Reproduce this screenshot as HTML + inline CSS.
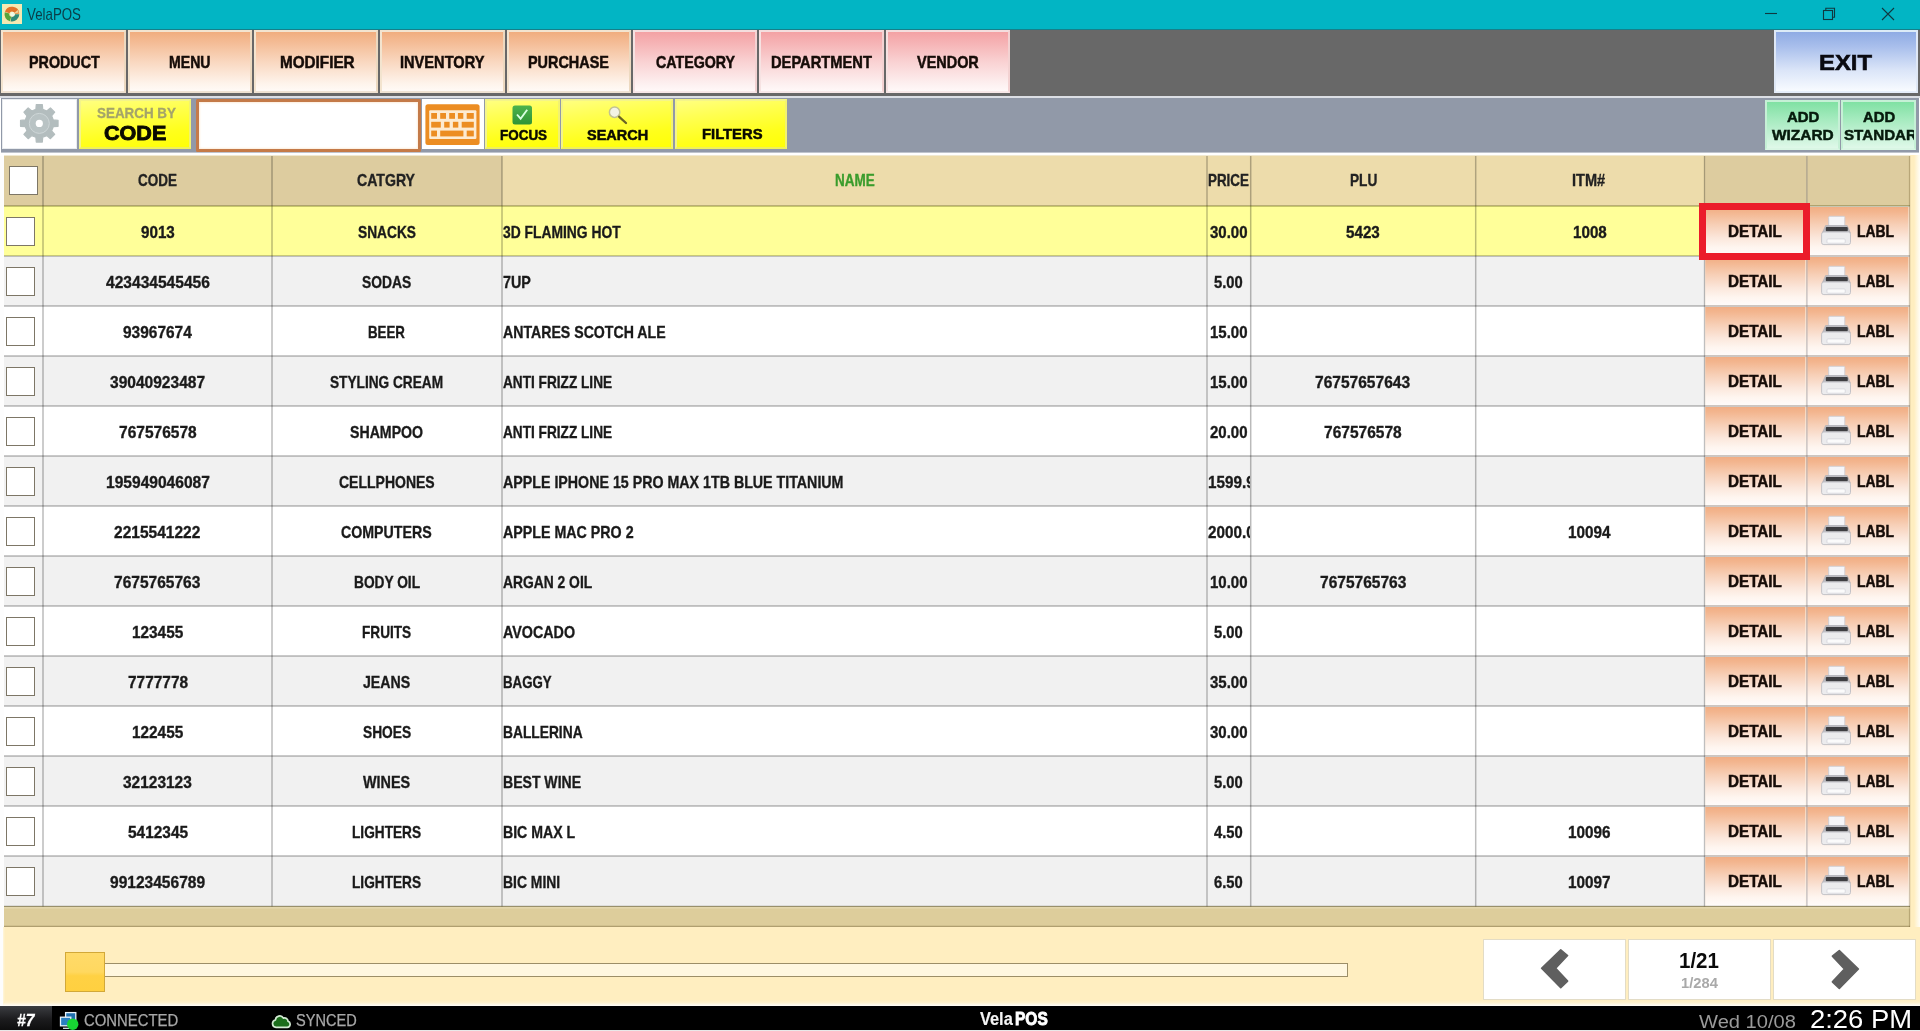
<!DOCTYPE html>
<html><head><meta charset="utf-8"><title>VelaPOS</title>
<style>
html,body{margin:0;padding:0}
html{overflow:hidden;width:1920px;height:1031px}
body{width:1920px;height:1031px;position:relative;overflow:hidden;background:#fff;font-family:"Liberation Sans",sans-serif}
div,span,svg{position:absolute;box-sizing:border-box}
.t{white-space:nowrap;transform-origin:0 50%;display:block}
.nb{top:30px;height:63px;border:2px solid #f3e4cf;border-right-color:#ecd9c0;border-bottom-color:#efe2d2}
.nbo{background:linear-gradient(#f0ad7e 0%,#f3b78e 12%,#f9d7bf 50%,#fef4ec 88%,#fffaf6 100%)}
.nbp{background:linear-gradient(#f3a2a4 0%,#f5adaf 12%,#f9d1d2 50%,#fdf0f0 88%,#fff8f8 100%);border-color:#f4dede #f3d2d2 #f8e8e8 #f6e2e2}
.yb{top:99px;height:50px;border:2px solid #f4f48a;border-bottom-color:#f0f05a;border-right-color:#f2f270;background:linear-gradient(172deg,#ffff80 0%,#ffff52 30%,#ffff1c 70%,#ffff06 100%)}
.gb{top:100px;height:50px;border:2px solid #c6f0d6;border-bottom-color:#d9f6e4;background:linear-gradient(#80e1a3 0%,#a3eabd 35%,#dff8e9 100%)}
.cb{width:29px;height:29px;background:#fff;border:1px solid #7d7666}
.vl{width:1px;background:#b9b9b9}
.hl{height:1px;background:#b9b9b9;left:4px;width:1906px}
.db{background:linear-gradient(#f1ae84 0%,#f3b58e 10%,#f7cfb6 36%,#fbe6da 62%,#fef5ef 82%,#fffcfa 100%);border-right:2px solid rgba(255,246,232,.55);border-left:1px solid rgba(255,246,232,.3)}
</style></head><body>

<div style="left:0;top:0;width:1920px;height:30px;background:#02b5c4"></div>
<div style="left:0;top:29px;width:1920px;height:1px;background:#16808a"></div>
<svg style="left:2px;top:4px;filter:blur(.5px)" width="20" height="20" viewBox="2 4 20 20"><rect x="2" y="4" width="20" height="20" fill="#f4e9b2"/>
<g fill="none" stroke-width="4.8">
<path d="M7.20 12.49A5.0 5.0 0 0 1 16.88 13.76" stroke="#e0742a"/>
<path d="M16.90 14.20A5.0 5.0 0 0 1 11.03 19.12" stroke="#2e8a78"/>
<path d="M10.61 19.03A5.0 5.0 0 0 1 7.07 12.91" stroke="#55a53a"/>
</g><circle cx="12.6" cy="14.3" r="2.3" fill="#eefbe8"/><path d="M12.6 14.3l5.2-4.2 1 2.4z" fill="#f4e9b2" opacity=".8"/></svg>
<span class="t" style="left:27.30px;top:6.00px;font-size:16.5px;line-height:16.5px;color:#0b3c46;font-weight:normal;transform:scaleX(0.8061);">VelaPOS</span>
<svg style="left:1760px;top:0" width="160" height="29" viewBox="0 0 160 29" fill="none" stroke="#10383f" stroke-width="1.1">
<path d="M5 13.5h12"/><rect x="63.5" y="10.5" width="9" height="9"/><path d="M65.8 10.5v-2.2h8.7v8.9h-2"/>
<path d="M122 8l12 12M134 8l-12 12"/></svg>
<div style="left:0;top:30px;width:1920px;height:66px;background:#686868"></div>
<div class="nb nbo" style="left:1px;width:125px"></div>
<span class="t" style="left:28.85px;top:54.00px;font-size:16.3px;line-height:16.3px;color:#160c08;font-weight:bold;transform:scaleX(0.8793);-webkit-text-stroke:0.5px #160c08;">PRODUCT</span>
<div class="nb nbo" style="left:128px;width:124px"></div>
<span class="t" style="left:169.40px;top:54.00px;font-size:16.3px;line-height:16.3px;color:#160c08;font-weight:bold;transform:scaleX(0.8660);-webkit-text-stroke:0.5px #160c08;">MENU</span>
<div class="nb nbo" style="left:254px;width:124px"></div>
<span class="t" style="left:279.65px;top:54.00px;font-size:16.3px;line-height:16.3px;color:#160c08;font-weight:bold;transform:scaleX(0.9372);-webkit-text-stroke:0.5px #160c08;">MODIFIER</span>
<div class="nb nbo" style="left:380px;width:125px"></div>
<span class="t" style="left:400.45px;top:54.00px;font-size:16.3px;line-height:16.3px;color:#160c08;font-weight:bold;transform:scaleX(0.8969);-webkit-text-stroke:0.5px #160c08;">INVENTORY</span>
<div class="nb nbo" style="left:507px;width:124px"></div>
<span class="t" style="left:528.30px;top:54.00px;font-size:16.3px;line-height:16.3px;color:#160c08;font-weight:bold;transform:scaleX(0.8858);-webkit-text-stroke:0.5px #160c08;">PURCHASE</span>
<div class="nb nbp" style="left:633px;width:124px"></div>
<span class="t" style="left:655.85px;top:54.00px;font-size:16.3px;line-height:16.3px;color:#160c08;font-weight:bold;transform:scaleX(0.8728);-webkit-text-stroke:0.5px #160c08;">CATEGORY</span>
<div class="nb nbp" style="left:759px;width:125px"></div>
<span class="t" style="left:770.50px;top:54.00px;font-size:16.3px;line-height:16.3px;color:#160c08;font-weight:bold;transform:scaleX(0.9019);-webkit-text-stroke:0.5px #160c08;">DEPARTMENT</span>
<div class="nb nbp" style="left:886px;width:124px"></div>
<span class="t" style="left:916.65px;top:54.00px;font-size:16.3px;line-height:16.3px;color:#160c08;font-weight:bold;transform:scaleX(0.8873);-webkit-text-stroke:0.5px #160c08;">VENDOR</span>
<div class="nb" style="left:1774px;top:30px;height:63px;width:144px;border-color:#dcebf7 #dfe8f6 #e6eefa #dfe8f6;background:linear-gradient(#8fabe4 0%,#a9bfec 25%,#dbe5f8 65%,#f8fbff 100%)"></div>
<span class="t" style="left:1819.25px;top:52.00px;font-size:22px;line-height:22px;color:#0a0a10;font-weight:bold;transform:scaleX(1.0831);-webkit-text-stroke:0.6px #0a0a10;">EXIT</span>
<div style="left:0;top:96px;width:1920px;height:2px;background:#dcdfe5"></div>
<div style="left:1px;top:98px;width:1918px;height:54px;background:#9199a8"></div><div style="left:1px;top:152px;width:1918px;height:1px;background:#bfc4cd"></div>
<div style="left:2px;top:99px;width:75px;height:50px;background:#fff;border:1px solid #e9ecef"></div>
<svg style="left:2px;top:99px" width="75" height="50" viewBox="2 99 75 50">
<path d="M35.88 109.31L36.27 104.54L42.33 104.54L42.72 109.31L46.77 110.99L50.42 107.90L54.70 112.18L51.61 115.83L53.29 119.88L58.06 120.27L58.06 126.33L53.29 126.72L51.61 130.77L54.70 134.42L50.42 138.70L46.77 135.61L42.72 137.29L42.33 142.06L36.27 142.06L35.88 137.29L31.83 135.61L28.18 138.70L23.90 134.42L26.99 130.77L25.31 126.72L20.54 126.33L20.54 120.27L25.31 119.88L26.99 115.83L23.90 112.18L28.18 107.90L31.83 110.99Z" fill="#b3bdbe" stroke="#b3bdbe" stroke-width="1.2" stroke-linejoin="round"/>
<circle cx="39.3" cy="123.4" r="10" fill="#b9c3c4" stroke="#cfd7d8" stroke-width="1"/>
<circle cx="39.3" cy="123.4" r="3.6" fill="#fff"/></svg>
<div class="yb" style="left:79px;width:112px"></div>
<span class="t" style="left:96.50px;top:105.00px;font-size:15px;line-height:15px;color:#a4a46a;font-weight:bold;transform:scaleX(0.8942);-webkit-text-stroke:0.3px #a4a46a;">SEARCH BY</span>
<span class="t" style="left:104.15px;top:122.00px;font-size:21px;line-height:21px;color:#0a0a00;font-weight:bold;transform:scaleX(1.0265);-webkit-text-stroke:0.9px #0a0a00;">CODE</span>
<div style="left:195.6px;top:99px;width:225.6px;height:53px;background:#fff;border:solid #c47a48;border-width:3.6px 3px 3.8px 3px;border-radius:1.5px;box-shadow:inset 0 0 2px 1px #fdeedd"></div>
<div style="left:422px;top:99px;width:62px;height:50px;background:#fff"></div>
<svg style="left:422px;top:99px" width="62" height="50" viewBox="422 99 62 50"><rect x="425.4" y="104.2" width="54.2" height="40.8" rx="2.5" fill="#ec8d22"/><rect x="429.2" y="110.3" width="47.2" height="28.8" rx="1" fill="#fdebd2"/><rect x="430.3" y="111.4" width="45" height="26.6" fill="#fdebd2"/><rect x="431.2" y="113.0" width="5.8" height="5.8" fill="#ec8d22" stroke="#fdebd2" stroke-width="0"/><rect x="440.2" y="113.0" width="5.8" height="5.8" fill="#ec8d22" stroke="#fdebd2" stroke-width="0"/><rect x="449.2" y="113.0" width="5.8" height="5.8" fill="#ec8d22" stroke="#fdebd2" stroke-width="0"/><rect x="457.9" y="113.0" width="5.4" height="5.8" fill="#ec8d22" stroke="#fdebd2" stroke-width="0"/><rect x="466.7" y="113.0" width="7.1" height="5.8" fill="#ec8d22" stroke="#fdebd2" stroke-width="0"/><rect x="431.2" y="121.8" width="9.6" height="5.8" fill="#ec8d22" stroke="#fdebd2" stroke-width="0"/><rect x="444.2" y="121.8" width="5.4" height="5.8" fill="#ec8d22" stroke="#fdebd2" stroke-width="0"/><rect x="452.9" y="121.8" width="5.4" height="5.8" fill="#ec8d22" stroke="#fdebd2" stroke-width="0"/><rect x="461.7" y="121.8" width="12.1" height="5.8" fill="#ec8d22" stroke="#fdebd2" stroke-width="0"/><rect x="431.2" y="130.6" width="5.8" height="5.8" fill="#ec8d22" stroke="#fdebd2" stroke-width="0"/><rect x="440.2" y="130.6" width="23.2" height="5.8" fill="#ec8d22" stroke="#fdebd2" stroke-width="0"/><rect x="466.7" y="130.6" width="7.1" height="5.8" fill="#ec8d22" stroke="#fdebd2" stroke-width="0"/></svg>
<div class="yb" style="left:485px;width:75px"></div>
<svg style="left:512px;top:105px" width="21" height="20" viewBox="0 0 21 20"><defs><linearGradient id="gg" x1="0" y1="0" x2="0" y2="1"><stop offset="0" stop-color="#4cb24c"/><stop offset="1" stop-color="#2f9436"/></linearGradient></defs>
<rect x="0.5" y="0.5" width="19.5" height="19" rx="2.5" fill="url(#gg)"/><path d="M5 9.5l3.6 4.2 6.6-9" fill="none" stroke="#d8ffe0" stroke-width="1.9"/></svg>
<span class="t" style="left:499.55px;top:128.00px;font-size:14.6px;line-height:14.6px;color:#0a0a00;font-weight:bold;transform:scaleX(0.9217);-webkit-text-stroke:0.5px #0a0a00;">FOCUS</span>
<div class="yb" style="left:561px;width:112px"></div>
<svg style="left:604px;top:102px" width="28" height="26" viewBox="604 102 28 26"><circle cx="614.6" cy="112.2" r="5.2" fill="#f3f3e6" stroke="#c2c294" stroke-width="1.5"/>
<path d="M619.2 116.8l6.8 6.2" stroke="#6a6424" stroke-width="2.3" stroke-linecap="round"/></svg>
<span class="t" style="left:586.65px;top:128.00px;font-size:14.6px;line-height:14.6px;color:#0a0a00;font-weight:bold;transform:scaleX(0.9917);-webkit-text-stroke:0.5px #0a0a00;">SEARCH</span>
<div class="yb" style="left:675px;width:112px"></div>
<span class="t" style="left:701.55px;top:127.00px;font-size:14.6px;line-height:14.6px;color:#0a0a00;font-weight:bold;transform:scaleX(1.0132);-webkit-text-stroke:0.5px #0a0a00;">FILTERS</span>
<div class="gb" style="left:1765px;width:75px"></div>
<div class="gb" style="left:1841px;width:75px"></div>
<span class="t" style="left:1786.65px;top:110.00px;font-size:14.6px;line-height:14.6px;color:#061a0c;font-weight:bold;transform:scaleX(1.0258);-webkit-text-stroke:0.5px #061a0c;">ADD</span>
<span class="t" style="left:1772.05px;top:128.00px;font-size:14.6px;line-height:14.6px;color:#061a0c;font-weight:bold;transform:scaleX(1.0565);-webkit-text-stroke:0.5px #061a0c;">WIZARD</span>
<span class="t" style="left:1863.10px;top:110.00px;font-size:14.6px;line-height:14.6px;color:#061a0c;font-weight:bold;transform:scaleX(1.0163);-webkit-text-stroke:0.5px #061a0c;">ADD</span>
<div style="left:1843px;top:124px;width:71px;height:22px;overflow:hidden">
<span class="t" style="left:1.25px;top:4.00px;font-size:14.6px;line-height:14.6px;color:#061a0c;font-weight:bold;transform:scaleX(1.0385);-webkit-text-stroke:0.5px #061a0c;">STANDARD</span>
</div>
<div style="left:4px;top:155px;width:1906px;height:1px;background:#f0e9d2"></div>
<div style="left:0;top:156px;width:4px;height:771px;background:#fdfdfd"></div>
<div style="left:1910px;top:155px;width:10px;height:772px;background:linear-gradient(90deg,#ffeec0 0%,#ffeec0 40%,#fff6dc 70%,#fffdf6 100%)"></div>
<div style="left:4px;top:156px;width:1906px;height:50px;background:#ddcc9f"></div>
<div style="left:502px;top:156px;width:1202px;height:50px;background:#eddcab"></div>
<div style="left:4px;top:906px;width:1906px;height:21px;background:#ddcd9b"></div>
<div style="left:4px;top:206px;width:1701px;height:50px;background:#ffff99"></div>
<div class="db" style="left:1705px;top:207px;width:102px;height:49px"></div>
<div class="db" style="left:1807px;top:207px;width:103px;height:49px"></div>
<div style="left:4px;top:256px;width:1701px;height:50px;background:#f1f1f1"></div>
<div class="db" style="left:1705px;top:257px;width:102px;height:49px"></div>
<div class="db" style="left:1807px;top:257px;width:103px;height:49px"></div>
<div style="left:4px;top:306px;width:1701px;height:50px;background:#ffffff"></div>
<div class="db" style="left:1705px;top:307px;width:102px;height:49px"></div>
<div class="db" style="left:1807px;top:307px;width:103px;height:49px"></div>
<div style="left:4px;top:356px;width:1701px;height:50px;background:#f1f1f1"></div>
<div class="db" style="left:1705px;top:357px;width:102px;height:49px"></div>
<div class="db" style="left:1807px;top:357px;width:103px;height:49px"></div>
<div style="left:4px;top:406px;width:1701px;height:50px;background:#ffffff"></div>
<div class="db" style="left:1705px;top:407px;width:102px;height:49px"></div>
<div class="db" style="left:1807px;top:407px;width:103px;height:49px"></div>
<div style="left:4px;top:456px;width:1701px;height:50px;background:#f1f1f1"></div>
<div class="db" style="left:1705px;top:457px;width:102px;height:49px"></div>
<div class="db" style="left:1807px;top:457px;width:103px;height:49px"></div>
<div style="left:4px;top:506px;width:1701px;height:50px;background:#ffffff"></div>
<div class="db" style="left:1705px;top:507px;width:102px;height:49px"></div>
<div class="db" style="left:1807px;top:507px;width:103px;height:49px"></div>
<div style="left:4px;top:556px;width:1701px;height:50px;background:#f1f1f1"></div>
<div class="db" style="left:1705px;top:557px;width:102px;height:49px"></div>
<div class="db" style="left:1807px;top:557px;width:103px;height:49px"></div>
<div style="left:4px;top:606px;width:1701px;height:50px;background:#ffffff"></div>
<div class="db" style="left:1705px;top:607px;width:102px;height:49px"></div>
<div class="db" style="left:1807px;top:607px;width:103px;height:49px"></div>
<div style="left:4px;top:656px;width:1701px;height:50px;background:#f1f1f1"></div>
<div class="db" style="left:1705px;top:657px;width:102px;height:49px"></div>
<div class="db" style="left:1807px;top:657px;width:103px;height:49px"></div>
<div style="left:4px;top:706px;width:1701px;height:50px;background:#ffffff"></div>
<div class="db" style="left:1705px;top:707px;width:102px;height:49px"></div>
<div class="db" style="left:1807px;top:707px;width:103px;height:49px"></div>
<div style="left:4px;top:756px;width:1701px;height:50px;background:#f1f1f1"></div>
<div class="db" style="left:1705px;top:757px;width:102px;height:49px"></div>
<div class="db" style="left:1807px;top:757px;width:103px;height:49px"></div>
<div style="left:4px;top:806px;width:1701px;height:50px;background:#ffffff"></div>
<div class="db" style="left:1705px;top:807px;width:102px;height:49px"></div>
<div class="db" style="left:1807px;top:807px;width:103px;height:49px"></div>
<div style="left:4px;top:856px;width:1701px;height:50px;background:#f1f1f1"></div>
<div class="db" style="left:1705px;top:857px;width:102px;height:49px"></div>
<div class="db" style="left:1807px;top:857px;width:103px;height:49px"></div>
<span class="t" style="left:137.72px;top:173.00px;font-size:16.6px;line-height:16.6px;color:#222;font-weight:bold;transform:scaleX(0.8119);-webkit-text-stroke:0.35px #222;">CODE</span>
<span class="t" style="left:357.48px;top:173.00px;font-size:16.6px;line-height:16.6px;color:#222;font-weight:bold;transform:scaleX(0.8508);-webkit-text-stroke:0.35px #222;">CATGRY</span>
<span class="t" style="left:834.77px;top:173.00px;font-size:16.6px;line-height:16.6px;color:#3a9c2c;font-weight:bold;transform:scaleX(0.8124);-webkit-text-stroke:0.35px #3a9c2c;">NAME</span>
<span class="t" style="left:1208.27px;top:173.00px;font-size:16.6px;line-height:16.6px;color:#222;font-weight:bold;transform:scaleX(0.8062);-webkit-text-stroke:0.35px #222;">PRICE</span>
<span class="t" style="left:1349.73px;top:173.00px;font-size:16.6px;line-height:16.6px;color:#222;font-weight:bold;transform:scaleX(0.8238);-webkit-text-stroke:0.35px #222;">PLU</span>
<span class="t" style="left:1572.42px;top:173.00px;font-size:16.6px;line-height:16.6px;color:#222;font-weight:bold;transform:scaleX(0.8759);-webkit-text-stroke:0.35px #222;">ITM#</span>
<div class="cb" style="left:9px;top:166px"></div>
<div class="cb" style="left:6px;top:217px"></div>
<span class="t" style="left:140.73px;top:225.00px;font-size:16.6px;line-height:16.6px;color:#1a1a1a;font-weight:bold;transform:scaleX(0.9153);-webkit-text-stroke:0.35px #1a1a1a;">9013</span>
<span class="t" style="left:357.62px;top:225.00px;font-size:16.6px;line-height:16.6px;color:#1a1a1a;font-weight:bold;transform:scaleX(0.8272);-webkit-text-stroke:0.35px #1a1a1a;">SNACKS</span>
<span class="t" style="left:502.78px;top:225.00px;font-size:16.6px;line-height:16.6px;color:#1a1a1a;font-weight:bold;transform:scaleX(0.8338);-webkit-text-stroke:0.35px #1a1a1a;">3D FLAMING HOT</span>
<span class="t" style="left:1209.93px;top:225.00px;font-size:16.6px;line-height:16.6px;color:#1a1a1a;font-weight:bold;transform:scaleX(0.9043);-webkit-text-stroke:0.35px #1a1a1a;">30.00</span>
<span class="t" style="left:1346.13px;top:225.00px;font-size:16.6px;line-height:16.6px;color:#1a1a1a;font-weight:bold;transform:scaleX(0.9153);-webkit-text-stroke:0.35px #1a1a1a;">5423</span>
<span class="t" style="left:1572.84px;top:225.00px;font-size:16.6px;line-height:16.6px;color:#1a1a1a;font-weight:bold;transform:scaleX(0.9153);-webkit-text-stroke:0.35px #1a1a1a;">1008</span>
<span class="t" style="left:1728.15px;top:224.00px;font-size:15.8px;line-height:15.8px;color:#160c08;font-weight:bold;transform:scaleX(0.9637);-webkit-text-stroke:0.5px #160c08;">DETAIL</span>
<span class="t" style="left:1857.25px;top:224.00px;font-size:15.8px;line-height:15.8px;color:#160c08;font-weight:bold;transform:scaleX(0.8794);-webkit-text-stroke:0.5px #160c08;">LABL</span>
<svg style="left:1815px;top:214px" width="42" height="34" viewBox="1815 8 42 34">
<path d="M1829.3 10.3h14.9l.6 1v10.5h-16.1v-10.5z" fill="#f6f6f9" stroke="#cdcdd4" stroke-width=".9"/>
<path d="M1825.6 19.6h21.6l3.2 7.6h-28.2z" fill="#bebec3" stroke="#a9a9b0" stroke-width=".7"/>
<rect x="1825.8" y="21" width="22" height="4.2" rx=".9" fill="#3e3e42"/>
<rect x="1821.6" y="26" width="28.9" height="12.6" rx="2.2" fill="#ececee" stroke="#bdbdc3" stroke-width=".9"/>
<rect x="1827" y="32.9" width="18.2" height="4.3" rx="1" fill="#fbfbfb" stroke="#d3d3d8" stroke-width=".7"/></svg>
<div class="cb" style="left:6px;top:267px"></div>
<span class="t" style="left:105.66px;top:275.00px;font-size:16.6px;line-height:16.6px;color:#1a1a1a;font-weight:bold;transform:scaleX(0.9383);-webkit-text-stroke:0.35px #1a1a1a;">423434545456</span>
<span class="t" style="left:361.98px;top:275.00px;font-size:16.6px;line-height:16.6px;color:#1a1a1a;font-weight:bold;transform:scaleX(0.8334);-webkit-text-stroke:0.35px #1a1a1a;">SODAS</span>
<span class="t" style="left:502.78px;top:275.00px;font-size:16.6px;line-height:16.6px;color:#1a1a1a;font-weight:bold;transform:scaleX(0.8635);-webkit-text-stroke:0.35px #1a1a1a;">7UP</span>
<span class="t" style="left:1214.32px;top:275.00px;font-size:16.6px;line-height:16.6px;color:#1a1a1a;font-weight:bold;transform:scaleX(0.8885);-webkit-text-stroke:0.35px #1a1a1a;">5.00</span>
<span class="t" style="left:1728.15px;top:274.00px;font-size:15.8px;line-height:15.8px;color:#160c08;font-weight:bold;transform:scaleX(0.9637);-webkit-text-stroke:0.5px #160c08;">DETAIL</span>
<span class="t" style="left:1857.25px;top:274.00px;font-size:15.8px;line-height:15.8px;color:#160c08;font-weight:bold;transform:scaleX(0.8794);-webkit-text-stroke:0.5px #160c08;">LABL</span>
<svg style="left:1815px;top:264px" width="42" height="34" viewBox="1815 8 42 34">
<path d="M1829.3 10.3h14.9l.6 1v10.5h-16.1v-10.5z" fill="#f6f6f9" stroke="#cdcdd4" stroke-width=".9"/>
<path d="M1825.6 19.6h21.6l3.2 7.6h-28.2z" fill="#bebec3" stroke="#a9a9b0" stroke-width=".7"/>
<rect x="1825.8" y="21" width="22" height="4.2" rx=".9" fill="#3e3e42"/>
<rect x="1821.6" y="26" width="28.9" height="12.6" rx="2.2" fill="#ececee" stroke="#bdbdc3" stroke-width=".9"/>
<rect x="1827" y="32.9" width="18.2" height="4.3" rx="1" fill="#fbfbfb" stroke="#d3d3d8" stroke-width=".7"/></svg>
<div class="cb" style="left:6px;top:317px"></div>
<span class="t" style="left:123.19px;top:325.00px;font-size:16.6px;line-height:16.6px;color:#1a1a1a;font-weight:bold;transform:scaleX(0.9315);-webkit-text-stroke:0.35px #1a1a1a;">93967674</span>
<span class="t" style="left:368.12px;top:325.00px;font-size:16.6px;line-height:16.6px;color:#1a1a1a;font-weight:bold;transform:scaleX(0.8007);-webkit-text-stroke:0.35px #1a1a1a;">BEER</span>
<span class="t" style="left:502.78px;top:325.00px;font-size:16.6px;line-height:16.6px;color:#1a1a1a;font-weight:bold;transform:scaleX(0.8520);-webkit-text-stroke:0.35px #1a1a1a;">ANTARES SCOTCH ALE</span>
<span class="t" style="left:1209.93px;top:325.00px;font-size:16.6px;line-height:16.6px;color:#1a1a1a;font-weight:bold;transform:scaleX(0.9043);-webkit-text-stroke:0.35px #1a1a1a;">15.00</span>
<span class="t" style="left:1728.15px;top:324.00px;font-size:15.8px;line-height:15.8px;color:#160c08;font-weight:bold;transform:scaleX(0.9637);-webkit-text-stroke:0.5px #160c08;">DETAIL</span>
<span class="t" style="left:1857.25px;top:324.00px;font-size:15.8px;line-height:15.8px;color:#160c08;font-weight:bold;transform:scaleX(0.8794);-webkit-text-stroke:0.5px #160c08;">LABL</span>
<svg style="left:1815px;top:314px" width="42" height="34" viewBox="1815 8 42 34">
<path d="M1829.3 10.3h14.9l.6 1v10.5h-16.1v-10.5z" fill="#f6f6f9" stroke="#cdcdd4" stroke-width=".9"/>
<path d="M1825.6 19.6h21.6l3.2 7.6h-28.2z" fill="#bebec3" stroke="#a9a9b0" stroke-width=".7"/>
<rect x="1825.8" y="21" width="22" height="4.2" rx=".9" fill="#3e3e42"/>
<rect x="1821.6" y="26" width="28.9" height="12.6" rx="2.2" fill="#ececee" stroke="#bdbdc3" stroke-width=".9"/>
<rect x="1827" y="32.9" width="18.2" height="4.3" rx="1" fill="#fbfbfb" stroke="#d3d3d8" stroke-width=".7"/></svg>
<div class="cb" style="left:6px;top:367px"></div>
<span class="t" style="left:110.04px;top:375.00px;font-size:16.6px;line-height:16.6px;color:#1a1a1a;font-weight:bold;transform:scaleX(0.9363);-webkit-text-stroke:0.35px #1a1a1a;">39040923487</span>
<span class="t" style="left:330.03px;top:375.00px;font-size:16.6px;line-height:16.6px;color:#1a1a1a;font-weight:bold;transform:scaleX(0.8232);-webkit-text-stroke:0.35px #1a1a1a;">STYLING CREAM</span>
<span class="t" style="left:502.78px;top:375.00px;font-size:16.6px;line-height:16.6px;color:#1a1a1a;font-weight:bold;transform:scaleX(0.8219);-webkit-text-stroke:0.35px #1a1a1a;">ANTI FRIZZ LINE</span>
<span class="t" style="left:1209.93px;top:375.00px;font-size:16.6px;line-height:16.6px;color:#1a1a1a;font-weight:bold;transform:scaleX(0.9043);-webkit-text-stroke:0.35px #1a1a1a;">15.00</span>
<span class="t" style="left:1315.44px;top:375.00px;font-size:16.6px;line-height:16.6px;color:#1a1a1a;font-weight:bold;transform:scaleX(0.9363);-webkit-text-stroke:0.35px #1a1a1a;">76757657643</span>
<span class="t" style="left:1728.15px;top:374.00px;font-size:15.8px;line-height:15.8px;color:#160c08;font-weight:bold;transform:scaleX(0.9637);-webkit-text-stroke:0.5px #160c08;">DETAIL</span>
<span class="t" style="left:1857.25px;top:374.00px;font-size:15.8px;line-height:15.8px;color:#160c08;font-weight:bold;transform:scaleX(0.8794);-webkit-text-stroke:0.5px #160c08;">LABL</span>
<svg style="left:1815px;top:364px" width="42" height="34" viewBox="1815 8 42 34">
<path d="M1829.3 10.3h14.9l.6 1v10.5h-16.1v-10.5z" fill="#f6f6f9" stroke="#cdcdd4" stroke-width=".9"/>
<path d="M1825.6 19.6h21.6l3.2 7.6h-28.2z" fill="#bebec3" stroke="#a9a9b0" stroke-width=".7"/>
<rect x="1825.8" y="21" width="22" height="4.2" rx=".9" fill="#3e3e42"/>
<rect x="1821.6" y="26" width="28.9" height="12.6" rx="2.2" fill="#ececee" stroke="#bdbdc3" stroke-width=".9"/>
<rect x="1827" y="32.9" width="18.2" height="4.3" rx="1" fill="#fbfbfb" stroke="#d3d3d8" stroke-width=".7"/></svg>
<div class="cb" style="left:6px;top:417px"></div>
<span class="t" style="left:118.81px;top:425.00px;font-size:16.6px;line-height:16.6px;color:#1a1a1a;font-weight:bold;transform:scaleX(0.9347);-webkit-text-stroke:0.35px #1a1a1a;">767576578</span>
<span class="t" style="left:350.03px;top:425.00px;font-size:16.6px;line-height:16.6px;color:#1a1a1a;font-weight:bold;transform:scaleX(0.8523);-webkit-text-stroke:0.35px #1a1a1a;">SHAMPOO</span>
<span class="t" style="left:502.78px;top:425.00px;font-size:16.6px;line-height:16.6px;color:#1a1a1a;font-weight:bold;transform:scaleX(0.8219);-webkit-text-stroke:0.35px #1a1a1a;">ANTI FRIZZ LINE</span>
<span class="t" style="left:1209.93px;top:425.00px;font-size:16.6px;line-height:16.6px;color:#1a1a1a;font-weight:bold;transform:scaleX(0.9043);-webkit-text-stroke:0.35px #1a1a1a;">20.00</span>
<span class="t" style="left:1324.21px;top:425.00px;font-size:16.6px;line-height:16.6px;color:#1a1a1a;font-weight:bold;transform:scaleX(0.9347);-webkit-text-stroke:0.35px #1a1a1a;">767576578</span>
<span class="t" style="left:1728.15px;top:424.00px;font-size:15.8px;line-height:15.8px;color:#160c08;font-weight:bold;transform:scaleX(0.9637);-webkit-text-stroke:0.5px #160c08;">DETAIL</span>
<span class="t" style="left:1857.25px;top:424.00px;font-size:15.8px;line-height:15.8px;color:#160c08;font-weight:bold;transform:scaleX(0.8794);-webkit-text-stroke:0.5px #160c08;">LABL</span>
<svg style="left:1815px;top:414px" width="42" height="34" viewBox="1815 8 42 34">
<path d="M1829.3 10.3h14.9l.6 1v10.5h-16.1v-10.5z" fill="#f6f6f9" stroke="#cdcdd4" stroke-width=".9"/>
<path d="M1825.6 19.6h21.6l3.2 7.6h-28.2z" fill="#bebec3" stroke="#a9a9b0" stroke-width=".7"/>
<rect x="1825.8" y="21" width="22" height="4.2" rx=".9" fill="#3e3e42"/>
<rect x="1821.6" y="26" width="28.9" height="12.6" rx="2.2" fill="#ececee" stroke="#bdbdc3" stroke-width=".9"/>
<rect x="1827" y="32.9" width="18.2" height="4.3" rx="1" fill="#fbfbfb" stroke="#d3d3d8" stroke-width=".7"/></svg>
<div class="cb" style="left:6px;top:467px"></div>
<span class="t" style="left:105.66px;top:475.00px;font-size:16.6px;line-height:16.6px;color:#1a1a1a;font-weight:bold;transform:scaleX(0.9383);-webkit-text-stroke:0.35px #1a1a1a;">195949046087</span>
<span class="t" style="left:338.78px;top:475.00px;font-size:16.6px;line-height:16.6px;color:#1a1a1a;font-weight:bold;transform:scaleX(0.8436);-webkit-text-stroke:0.35px #1a1a1a;">CELLPHONES</span>
<span class="t" style="left:502.78px;top:475.00px;font-size:16.6px;line-height:16.6px;color:#1a1a1a;font-weight:bold;transform:scaleX(0.8575);-webkit-text-stroke:0.35px #1a1a1a;">APPLE IPHONE 15 PRO MAX 1TB BLUE TITANIUM</span>
<div style="left:1207px;top:456px;width:43px;height:49px;overflow:hidden">
<span class="t" style="left:0.98px;top:19.00px;font-size:16.6px;line-height:16.6px;color:#1a1a1a;font-weight:bold;transform:scaleX(0.9190);-webkit-text-stroke:0.35px #1a1a1a;">1599.99</span>
</div>
<span class="t" style="left:1728.15px;top:474.00px;font-size:15.8px;line-height:15.8px;color:#160c08;font-weight:bold;transform:scaleX(0.9637);-webkit-text-stroke:0.5px #160c08;">DETAIL</span>
<span class="t" style="left:1857.25px;top:474.00px;font-size:15.8px;line-height:15.8px;color:#160c08;font-weight:bold;transform:scaleX(0.8794);-webkit-text-stroke:0.5px #160c08;">LABL</span>
<svg style="left:1815px;top:464px" width="42" height="34" viewBox="1815 8 42 34">
<path d="M1829.3 10.3h14.9l.6 1v10.5h-16.1v-10.5z" fill="#f6f6f9" stroke="#cdcdd4" stroke-width=".9"/>
<path d="M1825.6 19.6h21.6l3.2 7.6h-28.2z" fill="#bebec3" stroke="#a9a9b0" stroke-width=".7"/>
<rect x="1825.8" y="21" width="22" height="4.2" rx=".9" fill="#3e3e42"/>
<rect x="1821.6" y="26" width="28.9" height="12.6" rx="2.2" fill="#ececee" stroke="#bdbdc3" stroke-width=".9"/>
<rect x="1827" y="32.9" width="18.2" height="4.3" rx="1" fill="#fbfbfb" stroke="#d3d3d8" stroke-width=".7"/></svg>
<div class="cb" style="left:6px;top:517px"></div>
<span class="t" style="left:114.43px;top:525.00px;font-size:16.6px;line-height:16.6px;color:#1a1a1a;font-weight:bold;transform:scaleX(0.9356);-webkit-text-stroke:0.35px #1a1a1a;">2215541222</span>
<span class="t" style="left:341.28px;top:525.00px;font-size:16.6px;line-height:16.6px;color:#1a1a1a;font-weight:bold;transform:scaleX(0.8546);-webkit-text-stroke:0.35px #1a1a1a;">COMPUTERS</span>
<span class="t" style="left:502.78px;top:525.00px;font-size:16.6px;line-height:16.6px;color:#1a1a1a;font-weight:bold;transform:scaleX(0.8583);-webkit-text-stroke:0.35px #1a1a1a;">APPLE MAC PRO 2</span>
<div style="left:1207px;top:506px;width:43px;height:49px;overflow:hidden">
<span class="t" style="left:0.98px;top:19.00px;font-size:16.6px;line-height:16.6px;color:#1a1a1a;font-weight:bold;transform:scaleX(0.9190);-webkit-text-stroke:0.35px #1a1a1a;">2000.00</span>
</div>
<span class="t" style="left:1568.45px;top:525.00px;font-size:16.6px;line-height:16.6px;color:#1a1a1a;font-weight:bold;transform:scaleX(0.9209);-webkit-text-stroke:0.35px #1a1a1a;">10094</span>
<span class="t" style="left:1728.15px;top:524.00px;font-size:15.8px;line-height:15.8px;color:#160c08;font-weight:bold;transform:scaleX(0.9637);-webkit-text-stroke:0.5px #160c08;">DETAIL</span>
<span class="t" style="left:1857.25px;top:524.00px;font-size:15.8px;line-height:15.8px;color:#160c08;font-weight:bold;transform:scaleX(0.8794);-webkit-text-stroke:0.5px #160c08;">LABL</span>
<svg style="left:1815px;top:514px" width="42" height="34" viewBox="1815 8 42 34">
<path d="M1829.3 10.3h14.9l.6 1v10.5h-16.1v-10.5z" fill="#f6f6f9" stroke="#cdcdd4" stroke-width=".9"/>
<path d="M1825.6 19.6h21.6l3.2 7.6h-28.2z" fill="#bebec3" stroke="#a9a9b0" stroke-width=".7"/>
<rect x="1825.8" y="21" width="22" height="4.2" rx=".9" fill="#3e3e42"/>
<rect x="1821.6" y="26" width="28.9" height="12.6" rx="2.2" fill="#ececee" stroke="#bdbdc3" stroke-width=".9"/>
<rect x="1827" y="32.9" width="18.2" height="4.3" rx="1" fill="#fbfbfb" stroke="#d3d3d8" stroke-width=".7"/></svg>
<div class="cb" style="left:6px;top:567px"></div>
<span class="t" style="left:114.43px;top:575.00px;font-size:16.6px;line-height:16.6px;color:#1a1a1a;font-weight:bold;transform:scaleX(0.9356);-webkit-text-stroke:0.35px #1a1a1a;">7675765763</span>
<span class="t" style="left:353.53px;top:575.00px;font-size:16.6px;line-height:16.6px;color:#1a1a1a;font-weight:bold;transform:scaleX(0.8268);-webkit-text-stroke:0.35px #1a1a1a;">BODY OIL</span>
<span class="t" style="left:502.78px;top:575.00px;font-size:16.6px;line-height:16.6px;color:#1a1a1a;font-weight:bold;transform:scaleX(0.8339);-webkit-text-stroke:0.35px #1a1a1a;">ARGAN 2 OIL</span>
<span class="t" style="left:1209.93px;top:575.00px;font-size:16.6px;line-height:16.6px;color:#1a1a1a;font-weight:bold;transform:scaleX(0.9043);-webkit-text-stroke:0.35px #1a1a1a;">10.00</span>
<span class="t" style="left:1319.83px;top:575.00px;font-size:16.6px;line-height:16.6px;color:#1a1a1a;font-weight:bold;transform:scaleX(0.9356);-webkit-text-stroke:0.35px #1a1a1a;">7675765763</span>
<span class="t" style="left:1728.15px;top:574.00px;font-size:15.8px;line-height:15.8px;color:#160c08;font-weight:bold;transform:scaleX(0.9637);-webkit-text-stroke:0.5px #160c08;">DETAIL</span>
<span class="t" style="left:1857.25px;top:574.00px;font-size:15.8px;line-height:15.8px;color:#160c08;font-weight:bold;transform:scaleX(0.8794);-webkit-text-stroke:0.5px #160c08;">LABL</span>
<svg style="left:1815px;top:564px" width="42" height="34" viewBox="1815 8 42 34">
<path d="M1829.3 10.3h14.9l.6 1v10.5h-16.1v-10.5z" fill="#f6f6f9" stroke="#cdcdd4" stroke-width=".9"/>
<path d="M1825.6 19.6h21.6l3.2 7.6h-28.2z" fill="#bebec3" stroke="#a9a9b0" stroke-width=".7"/>
<rect x="1825.8" y="21" width="22" height="4.2" rx=".9" fill="#3e3e42"/>
<rect x="1821.6" y="26" width="28.9" height="12.6" rx="2.2" fill="#ececee" stroke="#bdbdc3" stroke-width=".9"/>
<rect x="1827" y="32.9" width="18.2" height="4.3" rx="1" fill="#fbfbfb" stroke="#d3d3d8" stroke-width=".7"/></svg>
<div class="cb" style="left:6px;top:617px"></div>
<span class="t" style="left:131.97px;top:625.00px;font-size:16.6px;line-height:16.6px;color:#1a1a1a;font-weight:bold;transform:scaleX(0.9247);-webkit-text-stroke:0.35px #1a1a1a;">123455</span>
<span class="t" style="left:362.03px;top:625.00px;font-size:16.6px;line-height:16.6px;color:#1a1a1a;font-weight:bold;transform:scaleX(0.8202);-webkit-text-stroke:0.35px #1a1a1a;">FRUITS</span>
<span class="t" style="left:502.78px;top:625.00px;font-size:16.6px;line-height:16.6px;color:#1a1a1a;font-weight:bold;transform:scaleX(0.8624);-webkit-text-stroke:0.35px #1a1a1a;">AVOCADO</span>
<span class="t" style="left:1214.32px;top:625.00px;font-size:16.6px;line-height:16.6px;color:#1a1a1a;font-weight:bold;transform:scaleX(0.8885);-webkit-text-stroke:0.35px #1a1a1a;">5.00</span>
<span class="t" style="left:1728.15px;top:624.00px;font-size:15.8px;line-height:15.8px;color:#160c08;font-weight:bold;transform:scaleX(0.9637);-webkit-text-stroke:0.5px #160c08;">DETAIL</span>
<span class="t" style="left:1857.25px;top:624.00px;font-size:15.8px;line-height:15.8px;color:#160c08;font-weight:bold;transform:scaleX(0.8794);-webkit-text-stroke:0.5px #160c08;">LABL</span>
<svg style="left:1815px;top:614px" width="42" height="34" viewBox="1815 8 42 34">
<path d="M1829.3 10.3h14.9l.6 1v10.5h-16.1v-10.5z" fill="#f6f6f9" stroke="#cdcdd4" stroke-width=".9"/>
<path d="M1825.6 19.6h21.6l3.2 7.6h-28.2z" fill="#bebec3" stroke="#a9a9b0" stroke-width=".7"/>
<rect x="1825.8" y="21" width="22" height="4.2" rx=".9" fill="#3e3e42"/>
<rect x="1821.6" y="26" width="28.9" height="12.6" rx="2.2" fill="#ececee" stroke="#bdbdc3" stroke-width=".9"/>
<rect x="1827" y="32.9" width="18.2" height="4.3" rx="1" fill="#fbfbfb" stroke="#d3d3d8" stroke-width=".7"/></svg>
<div class="cb" style="left:6px;top:667px"></div>
<span class="t" style="left:127.58px;top:675.00px;font-size:16.6px;line-height:16.6px;color:#1a1a1a;font-weight:bold;transform:scaleX(0.9298);-webkit-text-stroke:0.35px #1a1a1a;">7777778</span>
<span class="t" style="left:363.03px;top:675.00px;font-size:16.6px;line-height:16.6px;color:#1a1a1a;font-weight:bold;transform:scaleX(0.8530);-webkit-text-stroke:0.35px #1a1a1a;">JEANS</span>
<span class="t" style="left:502.78px;top:675.00px;font-size:16.6px;line-height:16.6px;color:#1a1a1a;font-weight:bold;transform:scaleX(0.7986);-webkit-text-stroke:0.35px #1a1a1a;">BAGGY</span>
<span class="t" style="left:1209.93px;top:675.00px;font-size:16.6px;line-height:16.6px;color:#1a1a1a;font-weight:bold;transform:scaleX(0.9043);-webkit-text-stroke:0.35px #1a1a1a;">35.00</span>
<span class="t" style="left:1728.15px;top:674.00px;font-size:15.8px;line-height:15.8px;color:#160c08;font-weight:bold;transform:scaleX(0.9637);-webkit-text-stroke:0.5px #160c08;">DETAIL</span>
<span class="t" style="left:1857.25px;top:674.00px;font-size:15.8px;line-height:15.8px;color:#160c08;font-weight:bold;transform:scaleX(0.8794);-webkit-text-stroke:0.5px #160c08;">LABL</span>
<svg style="left:1815px;top:664px" width="42" height="34" viewBox="1815 8 42 34">
<path d="M1829.3 10.3h14.9l.6 1v10.5h-16.1v-10.5z" fill="#f6f6f9" stroke="#cdcdd4" stroke-width=".9"/>
<path d="M1825.6 19.6h21.6l3.2 7.6h-28.2z" fill="#bebec3" stroke="#a9a9b0" stroke-width=".7"/>
<rect x="1825.8" y="21" width="22" height="4.2" rx=".9" fill="#3e3e42"/>
<rect x="1821.6" y="26" width="28.9" height="12.6" rx="2.2" fill="#ececee" stroke="#bdbdc3" stroke-width=".9"/>
<rect x="1827" y="32.9" width="18.2" height="4.3" rx="1" fill="#fbfbfb" stroke="#d3d3d8" stroke-width=".7"/></svg>
<div class="cb" style="left:6px;top:717px"></div>
<span class="t" style="left:131.97px;top:725.00px;font-size:16.6px;line-height:16.6px;color:#1a1a1a;font-weight:bold;transform:scaleX(0.9247);-webkit-text-stroke:0.35px #1a1a1a;">122455</span>
<span class="t" style="left:362.53px;top:725.00px;font-size:16.6px;line-height:16.6px;color:#1a1a1a;font-weight:bold;transform:scaleX(0.8287);-webkit-text-stroke:0.35px #1a1a1a;">SHOES</span>
<span class="t" style="left:502.78px;top:725.00px;font-size:16.6px;line-height:16.6px;color:#1a1a1a;font-weight:bold;transform:scaleX(0.8301);-webkit-text-stroke:0.35px #1a1a1a;">BALLERINA</span>
<span class="t" style="left:1209.93px;top:725.00px;font-size:16.6px;line-height:16.6px;color:#1a1a1a;font-weight:bold;transform:scaleX(0.9043);-webkit-text-stroke:0.35px #1a1a1a;">30.00</span>
<span class="t" style="left:1728.15px;top:724.00px;font-size:15.8px;line-height:15.8px;color:#160c08;font-weight:bold;transform:scaleX(0.9637);-webkit-text-stroke:0.5px #160c08;">DETAIL</span>
<span class="t" style="left:1857.25px;top:724.00px;font-size:15.8px;line-height:15.8px;color:#160c08;font-weight:bold;transform:scaleX(0.8794);-webkit-text-stroke:0.5px #160c08;">LABL</span>
<svg style="left:1815px;top:714px" width="42" height="34" viewBox="1815 8 42 34">
<path d="M1829.3 10.3h14.9l.6 1v10.5h-16.1v-10.5z" fill="#f6f6f9" stroke="#cdcdd4" stroke-width=".9"/>
<path d="M1825.6 19.6h21.6l3.2 7.6h-28.2z" fill="#bebec3" stroke="#a9a9b0" stroke-width=".7"/>
<rect x="1825.8" y="21" width="22" height="4.2" rx=".9" fill="#3e3e42"/>
<rect x="1821.6" y="26" width="28.9" height="12.6" rx="2.2" fill="#ececee" stroke="#bdbdc3" stroke-width=".9"/>
<rect x="1827" y="32.9" width="18.2" height="4.3" rx="1" fill="#fbfbfb" stroke="#d3d3d8" stroke-width=".7"/></svg>
<div class="cb" style="left:6px;top:767px"></div>
<span class="t" style="left:123.19px;top:775.00px;font-size:16.6px;line-height:16.6px;color:#1a1a1a;font-weight:bold;transform:scaleX(0.9315);-webkit-text-stroke:0.35px #1a1a1a;">32123123</span>
<span class="t" style="left:363.03px;top:775.00px;font-size:16.6px;line-height:16.6px;color:#1a1a1a;font-weight:bold;transform:scaleX(0.8660);-webkit-text-stroke:0.35px #1a1a1a;">WINES</span>
<span class="t" style="left:502.78px;top:775.00px;font-size:16.6px;line-height:16.6px;color:#1a1a1a;font-weight:bold;transform:scaleX(0.8467);-webkit-text-stroke:0.35px #1a1a1a;">BEST WINE</span>
<span class="t" style="left:1214.32px;top:775.00px;font-size:16.6px;line-height:16.6px;color:#1a1a1a;font-weight:bold;transform:scaleX(0.8885);-webkit-text-stroke:0.35px #1a1a1a;">5.00</span>
<span class="t" style="left:1728.15px;top:774.00px;font-size:15.8px;line-height:15.8px;color:#160c08;font-weight:bold;transform:scaleX(0.9637);-webkit-text-stroke:0.5px #160c08;">DETAIL</span>
<span class="t" style="left:1857.25px;top:774.00px;font-size:15.8px;line-height:15.8px;color:#160c08;font-weight:bold;transform:scaleX(0.8794);-webkit-text-stroke:0.5px #160c08;">LABL</span>
<svg style="left:1815px;top:764px" width="42" height="34" viewBox="1815 8 42 34">
<path d="M1829.3 10.3h14.9l.6 1v10.5h-16.1v-10.5z" fill="#f6f6f9" stroke="#cdcdd4" stroke-width=".9"/>
<path d="M1825.6 19.6h21.6l3.2 7.6h-28.2z" fill="#bebec3" stroke="#a9a9b0" stroke-width=".7"/>
<rect x="1825.8" y="21" width="22" height="4.2" rx=".9" fill="#3e3e42"/>
<rect x="1821.6" y="26" width="28.9" height="12.6" rx="2.2" fill="#ececee" stroke="#bdbdc3" stroke-width=".9"/>
<rect x="1827" y="32.9" width="18.2" height="4.3" rx="1" fill="#fbfbfb" stroke="#d3d3d8" stroke-width=".7"/></svg>
<div class="cb" style="left:6px;top:817px"></div>
<span class="t" style="left:127.58px;top:825.00px;font-size:16.6px;line-height:16.6px;color:#1a1a1a;font-weight:bold;transform:scaleX(0.9298);-webkit-text-stroke:0.35px #1a1a1a;">5412345</span>
<span class="t" style="left:352.03px;top:825.00px;font-size:16.6px;line-height:16.6px;color:#1a1a1a;font-weight:bold;transform:scaleX(0.8233);-webkit-text-stroke:0.35px #1a1a1a;">LIGHTERS</span>
<span class="t" style="left:502.78px;top:825.00px;font-size:16.6px;line-height:16.6px;color:#1a1a1a;font-weight:bold;transform:scaleX(0.8506);-webkit-text-stroke:0.35px #1a1a1a;">BIC MAX L</span>
<span class="t" style="left:1214.32px;top:825.00px;font-size:16.6px;line-height:16.6px;color:#1a1a1a;font-weight:bold;transform:scaleX(0.8885);-webkit-text-stroke:0.35px #1a1a1a;">4.50</span>
<span class="t" style="left:1568.45px;top:825.00px;font-size:16.6px;line-height:16.6px;color:#1a1a1a;font-weight:bold;transform:scaleX(0.9209);-webkit-text-stroke:0.35px #1a1a1a;">10096</span>
<span class="t" style="left:1728.15px;top:824.00px;font-size:15.8px;line-height:15.8px;color:#160c08;font-weight:bold;transform:scaleX(0.9637);-webkit-text-stroke:0.5px #160c08;">DETAIL</span>
<span class="t" style="left:1857.25px;top:824.00px;font-size:15.8px;line-height:15.8px;color:#160c08;font-weight:bold;transform:scaleX(0.8794);-webkit-text-stroke:0.5px #160c08;">LABL</span>
<svg style="left:1815px;top:814px" width="42" height="34" viewBox="1815 8 42 34">
<path d="M1829.3 10.3h14.9l.6 1v10.5h-16.1v-10.5z" fill="#f6f6f9" stroke="#cdcdd4" stroke-width=".9"/>
<path d="M1825.6 19.6h21.6l3.2 7.6h-28.2z" fill="#bebec3" stroke="#a9a9b0" stroke-width=".7"/>
<rect x="1825.8" y="21" width="22" height="4.2" rx=".9" fill="#3e3e42"/>
<rect x="1821.6" y="26" width="28.9" height="12.6" rx="2.2" fill="#ececee" stroke="#bdbdc3" stroke-width=".9"/>
<rect x="1827" y="32.9" width="18.2" height="4.3" rx="1" fill="#fbfbfb" stroke="#d3d3d8" stroke-width=".7"/></svg>
<div class="cb" style="left:6px;top:867px"></div>
<span class="t" style="left:110.04px;top:875.00px;font-size:16.6px;line-height:16.6px;color:#1a1a1a;font-weight:bold;transform:scaleX(0.9363);-webkit-text-stroke:0.35px #1a1a1a;">99123456789</span>
<span class="t" style="left:352.03px;top:875.00px;font-size:16.6px;line-height:16.6px;color:#1a1a1a;font-weight:bold;transform:scaleX(0.8233);-webkit-text-stroke:0.35px #1a1a1a;">LIGHTERS</span>
<span class="t" style="left:502.78px;top:875.00px;font-size:16.6px;line-height:16.6px;color:#1a1a1a;font-weight:bold;transform:scaleX(0.8377);-webkit-text-stroke:0.35px #1a1a1a;">BIC MINI</span>
<span class="t" style="left:1214.32px;top:875.00px;font-size:16.6px;line-height:16.6px;color:#1a1a1a;font-weight:bold;transform:scaleX(0.8885);-webkit-text-stroke:0.35px #1a1a1a;">6.50</span>
<span class="t" style="left:1568.45px;top:875.00px;font-size:16.6px;line-height:16.6px;color:#1a1a1a;font-weight:bold;transform:scaleX(0.9209);-webkit-text-stroke:0.35px #1a1a1a;">10097</span>
<span class="t" style="left:1728.15px;top:874.00px;font-size:15.8px;line-height:15.8px;color:#160c08;font-weight:bold;transform:scaleX(0.9637);-webkit-text-stroke:0.5px #160c08;">DETAIL</span>
<span class="t" style="left:1857.25px;top:874.00px;font-size:15.8px;line-height:15.8px;color:#160c08;font-weight:bold;transform:scaleX(0.8794);-webkit-text-stroke:0.5px #160c08;">LABL</span>
<svg style="left:1815px;top:864px" width="42" height="34" viewBox="1815 8 42 34">
<path d="M1829.3 10.3h14.9l.6 1v10.5h-16.1v-10.5z" fill="#f6f6f9" stroke="#cdcdd4" stroke-width=".9"/>
<path d="M1825.6 19.6h21.6l3.2 7.6h-28.2z" fill="#bebec3" stroke="#a9a9b0" stroke-width=".7"/>
<rect x="1825.8" y="21" width="22" height="4.2" rx=".9" fill="#3e3e42"/>
<rect x="1821.6" y="26" width="28.9" height="12.6" rx="2.2" fill="#ececee" stroke="#bdbdc3" stroke-width=".9"/>
<rect x="1827" y="32.9" width="18.2" height="4.3" rx="1" fill="#fbfbfb" stroke="#d3d3d8" stroke-width=".7"/></svg>
<svg style="left:0;top:150px" width="1920" height="790" viewBox="0 150 1920 790"><line x1="43" x2="43" y1="156" y2="906.5" stroke="rgba(0,0,0,.21)" stroke-width="1.9"/><line x1="272" x2="272" y1="156" y2="906.5" stroke="rgba(0,0,0,.21)" stroke-width="1.9"/><line x1="502" x2="502" y1="156" y2="906.5" stroke="rgba(0,0,0,.21)" stroke-width="1.9"/><line x1="1207" x2="1207" y1="156" y2="906.5" stroke="rgba(0,0,0,.21)" stroke-width="1.8"/><line x1="1250.7" x2="1250.7" y1="156" y2="906.5" stroke="rgba(0,0,0,.27)" stroke-width="1.5"/><line x1="1475.7" x2="1475.7" y1="156" y2="906.5" stroke="rgba(0,0,0,.26)" stroke-width="1.5"/><line x1="1704.5" x2="1704.5" y1="156" y2="906.5" stroke="rgba(0,0,0,.25)" stroke-width="1.3"/><line x1="1806.9" x2="1806.9" y1="156" y2="906.5" stroke="rgba(90,90,110,.34)" stroke-width="1.4"/><line x1="1909.6" x2="1909.6" y1="156" y2="927" stroke="rgba(90,70,20,.28)" stroke-width="1.4"/><line x1="4" x2="1910" y1="205.9" y2="205.9" stroke="rgba(70,70,0,.30)" stroke-width="2"/><line x1="4" x2="1705" y1="255.95" y2="255.95" stroke="rgba(0,0,0,.21)" stroke-width="1.9"/><line x1="1705" x2="1910" y1="255.95" y2="255.95" stroke="rgba(95,80,70,.42)" stroke-width="1.5"/><line x1="4" x2="1705" y1="305.95" y2="305.95" stroke="rgba(0,0,0,.21)" stroke-width="1.9"/><line x1="1705" x2="1910" y1="305.95" y2="305.95" stroke="rgba(95,80,70,.42)" stroke-width="1.5"/><line x1="4" x2="1705" y1="355.95" y2="355.95" stroke="rgba(0,0,0,.21)" stroke-width="1.9"/><line x1="1705" x2="1910" y1="355.95" y2="355.95" stroke="rgba(95,80,70,.42)" stroke-width="1.5"/><line x1="4" x2="1705" y1="405.95" y2="405.95" stroke="rgba(0,0,0,.21)" stroke-width="1.9"/><line x1="1705" x2="1910" y1="405.95" y2="405.95" stroke="rgba(95,80,70,.42)" stroke-width="1.5"/><line x1="4" x2="1705" y1="455.95" y2="455.95" stroke="rgba(0,0,0,.21)" stroke-width="1.9"/><line x1="1705" x2="1910" y1="455.95" y2="455.95" stroke="rgba(95,80,70,.42)" stroke-width="1.5"/><line x1="4" x2="1705" y1="505.95" y2="505.95" stroke="rgba(0,0,0,.21)" stroke-width="1.9"/><line x1="1705" x2="1910" y1="505.95" y2="505.95" stroke="rgba(95,80,70,.42)" stroke-width="1.5"/><line x1="4" x2="1705" y1="555.95" y2="555.95" stroke="rgba(0,0,0,.21)" stroke-width="1.9"/><line x1="1705" x2="1910" y1="555.95" y2="555.95" stroke="rgba(95,80,70,.42)" stroke-width="1.5"/><line x1="4" x2="1705" y1="605.95" y2="605.95" stroke="rgba(0,0,0,.21)" stroke-width="1.9"/><line x1="1705" x2="1910" y1="605.95" y2="605.95" stroke="rgba(95,80,70,.42)" stroke-width="1.5"/><line x1="4" x2="1705" y1="655.95" y2="655.95" stroke="rgba(0,0,0,.21)" stroke-width="1.9"/><line x1="1705" x2="1910" y1="655.95" y2="655.95" stroke="rgba(95,80,70,.42)" stroke-width="1.5"/><line x1="4" x2="1705" y1="705.95" y2="705.95" stroke="rgba(0,0,0,.21)" stroke-width="1.9"/><line x1="1705" x2="1910" y1="705.95" y2="705.95" stroke="rgba(95,80,70,.42)" stroke-width="1.5"/><line x1="4" x2="1705" y1="755.95" y2="755.95" stroke="rgba(0,0,0,.21)" stroke-width="1.9"/><line x1="1705" x2="1910" y1="755.95" y2="755.95" stroke="rgba(95,80,70,.42)" stroke-width="1.5"/><line x1="4" x2="1705" y1="805.95" y2="805.95" stroke="rgba(0,0,0,.21)" stroke-width="1.9"/><line x1="1705" x2="1910" y1="805.95" y2="805.95" stroke="rgba(95,80,70,.42)" stroke-width="1.5"/><line x1="4" x2="1705" y1="855.95" y2="855.95" stroke="rgba(0,0,0,.21)" stroke-width="1.9"/><line x1="1705" x2="1910" y1="855.95" y2="855.95" stroke="rgba(95,80,70,.42)" stroke-width="1.5"/><line x1="4" x2="1910" y1="906.4" y2="906.4" stroke="rgba(60,60,40,.42)" stroke-width="1.3"/><line x1="4" x2="1910" y1="907.8" y2="907.8" stroke="rgba(255,255,240,.28)" stroke-width="1.2"/><line x1="4" x2="1910" y1="926.4" y2="926.4" stroke="rgba(90,70,30,.34)" stroke-width="1.3"/></svg>
<div style="left:1699.2px;top:203.2px;width:110.5px;height:56.6px;border:7.5px solid #eb1c2a"></div>
<div style="left:0;top:927px;width:1920px;height:79px;background:#ffeec0"></div>
<div style="left:0;top:1000px;width:1920px;height:6px;background:linear-gradient(#ffeec0,#fff1cc 40%,#fffaee 85%,#fffdf8)"></div>
<div style="left:0;top:927px;width:3px;height:79px;background:#fdfdfd"></div>
<div style="left:3px;top:927px;width:2px;height:76px;background:linear-gradient(90deg,#fff6dc,#ffeec0)"></div>
<div style="left:104px;top:963px;width:1244px;height:14px;background:#fff7e0;border:1px solid #9c8e68"></div>
<div style="left:65px;top:952px;width:40px;height:40px;background:linear-gradient(#ffda6a 0%,#ffd85f 50%,#ffd144 60%,#ffd040 100%);border:1px solid #d2a838"></div>
<div style="left:1483px;top:939px;width:143px;height:61px;background:#fff;border:1px solid #e3dcc6"></div>
<div style="left:1628px;top:939px;width:143px;height:61px;background:#fff;border:1px solid #e3dcc6"></div>
<div style="left:1773px;top:939px;width:143px;height:61px;background:#fff;border:1px solid #e3dcc6"></div>
<svg style="left:1530px;top:940px" width="50" height="58" viewBox="1530 940 50 58"><path d="M1541.6 968.3L1560.75 949.9L1567.6 955.5L1555.65 968.3L1567.6 981.1L1560.75 987.7Z" fill="#5f5f5f" stroke="#5f5f5f" stroke-width="1.6" stroke-linejoin="round"/></svg>
<svg style="left:1820px;top:940px" width="50" height="58" viewBox="1820 940 50 58"><path d="M1858.4 969L1839.3 950.6L1832.4 956.2L1844.4 969L1832.4 981.8L1839.3 988.4Z" fill="#5f5f5f" stroke="#5f5f5f" stroke-width="1.6" stroke-linejoin="round"/></svg>
<span class="t" style="left:1679.20px;top:950.00px;font-size:22px;line-height:22px;color:#0a0a0a;font-weight:bold;transform:scaleX(0.9324);">1/21</span>
<span class="t" style="left:1681.00px;top:975.00px;font-size:15px;line-height:15px;color:#a9a9a9;font-weight:bold;transform:scaleX(0.9827);">1/284</span>
<div style="left:0;top:1006px;width:1920px;height:24px;background:#000"></div>
<div style="left:0;top:1030px;width:1920px;height:1px;background:#e8e8e8"></div>
<div style="left:0;top:1006px;width:52px;height:24px;background:linear-gradient(#3b3d41,#1c1c1e 55%,#0e0e0e)"></div>
<span class="t" style="left:16.95px;top:1013.00px;font-size:16px;line-height:16px;color:#fff;font-weight:bold;transform:scaleX(0.9741);font-style:italic;-webkit-text-stroke:0.3px #fff;">#7</span>
<svg style="left:58px;top:1008px;overflow:visible" width="24" height="23" viewBox="58 1008 24 23">
<rect x="65.6" y="1012.6" width="10.2" height="8.6" fill="#1f6fae" stroke="#e8f2fa" stroke-width="1.3"/>
<rect x="60.5" y="1017.2" width="10.3" height="8.6" fill="#2a7fc0" stroke="#e8f2fa" stroke-width="1.3"/>
<path d="M63 1028.3h6" stroke="#e8f2fa" stroke-width="1.2"/>
<circle cx="72.7" cy="1024.3" r="5.7" fill="#17d433"/></svg>
<span class="t" style="left:83.72px;top:1013.00px;font-size:15.6px;line-height:15.6px;color:#a8a8a8;font-weight:normal;transform:scaleX(0.9544);-webkit-text-stroke:0.25px #a8a8a8;">CONNECTED</span>
<svg style="left:270px;top:1012px" width="23" height="17" viewBox="270 1012 23 17">
<path d="M276 1027.3a3.7 3.7 0 0 1-.6-7.3 4.3 4.3 0 0 1 8-1.9 3.4 3.4 0 0 1 4.6 3 3.2 3.2 0 0 1-.8 6.2z" fill="#1c6e1c" stroke="#d3ead3" stroke-width="1.7" stroke-linejoin="round"/></svg>
<span class="t" style="left:295.62px;top:1013.00px;font-size:15.6px;line-height:15.6px;color:#a8a8a8;font-weight:normal;transform:scaleX(0.9339);-webkit-text-stroke:0.25px #a8a8a8;">SYNCED</span>
<span class="t" style="left:979.58px;top:1010.00px;font-size:18.5px;line-height:18.5px;color:#f4f4f4;font-weight:bold;transform:scaleX(0.8844);-webkit-text-stroke:0.15px #f4f4f4;">Vela</span>
<span class="t" style="left:1015.05px;top:1010.00px;font-size:18.5px;line-height:18.5px;color:#fff;font-weight:bold;transform:scaleX(0.8377);-webkit-text-stroke:0.9px #fff;">POS</span>
<div style="left:1690px;top:1006px;width:112px;height:24px;overflow:hidden">
<span class="t" style="left:8.60px;top:7.00px;font-size:18px;line-height:18px;color:#9a9a9a;font-weight:normal;transform:scaleX(1.1180);">Wed 10/08</span>
</div>
<div style="left:1800px;top:1006px;width:120px;height:24px;overflow:hidden">
<span class="t" style="left:10.30px;top:1.00px;font-size:25px;line-height:25px;color:#fff;font-weight:normal;transform:scaleX(1.0968);">2:26 PM</span>
</div>
</body></html>
